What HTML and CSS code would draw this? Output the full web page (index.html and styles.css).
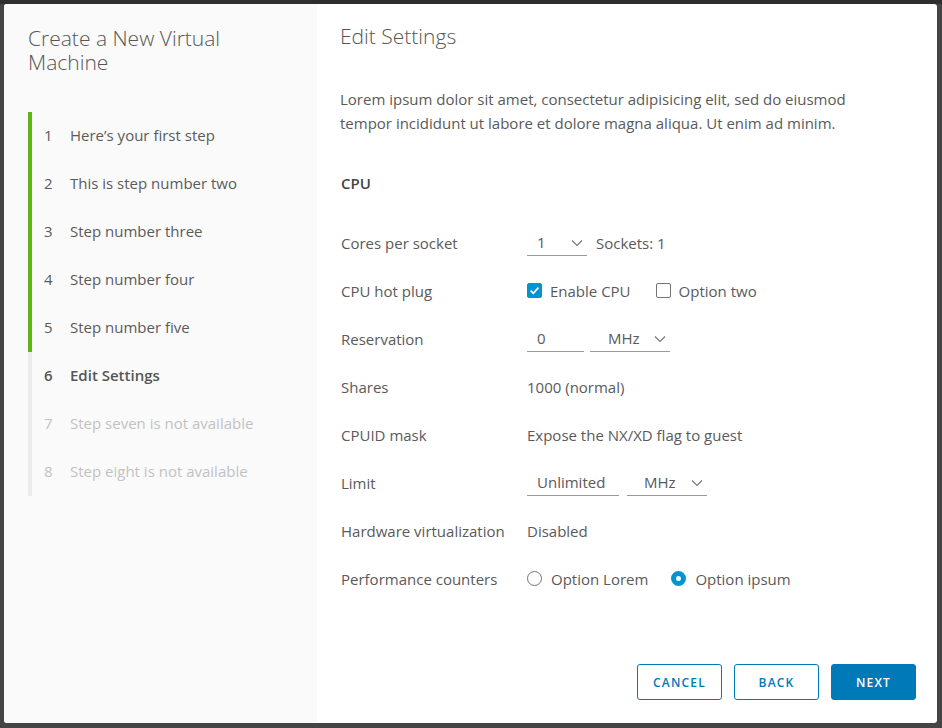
FILE: index.html
```html
<!DOCTYPE html>
<html lang="en">
<head>
<meta charset="utf-8">
<title>Create a New Virtual Machine</title>
<link rel="stylesheet" href="styles.css">
</head>
<body>
<div class="backdrop">
  <div class="modal">
    <aside class="nav">
      <h1 class="nav-title">Create a New Virtual Machine</h1>
      <ol class="steps">
        <li class="step done"><span class="num">1</span><span class="lbl">Here’s your first step</span></li>
        <li class="step done"><span class="num">2</span><span class="lbl">This is step number two</span></li>
        <li class="step done"><span class="num">3</span><span class="lbl">Step number three</span></li>
        <li class="step done"><span class="num">4</span><span class="lbl">Step number four</span></li>
        <li class="step done"><span class="num">5</span><span class="lbl">Step number five</span></li>
        <li class="step current"><span class="num">6</span><span class="lbl">Edit Settings</span></li>
        <li class="step disabled"><span class="num">7</span><span class="lbl">Step seven is not available</span></li>
        <li class="step disabled"><span class="num">8</span><span class="lbl">Step eight is not available</span></li>
      </ol>
    </aside>
    <main class="content">
      <h2 class="page-title">Edit Settings</h2>
      <p class="intro">Lorem ipsum dolor sit amet, consectetur adipisicing elit, sed do eiusmod tempor incididunt ut labore et dolore magna aliqua. Ut enim ad minim.</p>
      <h3 class="section">CPU</h3>
      <div class="form">
        <div class="row">
          <span class="label">Cores per socket</span>
          <div class="ctrl">
            <span class="select sel-cores"><span>1</span><svg class="chev" width="12" height="8" viewBox="0 0 12 8"><polyline points="1,1.5 6,6.5 11,1.5" fill="none" stroke="#747474" stroke-width="1.1"/></svg></span>
            <span class="text">Sockets: 1</span>
          </div>
        </div>
        <div class="row">
          <span class="label">CPU hot plug</span>
          <div class="ctrl gap-lg">
            <label class="check"><span class="box checked"><svg width="15" height="15" viewBox="0 0 15 15"><polyline points="3.6,7.6 6.3,10.2 11.4,4.6" fill="none" stroke="#fff" stroke-width="1.7"/></svg></span>Enable CPU</label>
            <label class="check"><span class="box"></span>Option two</label>
          </div>
        </div>
        <div class="row">
          <span class="label">Reservation</span>
          <div class="ctrl">
            <span class="input in-res">0</span>
            <span class="select sel-mhz"><span>MHz</span><svg class="chev" width="12" height="8" viewBox="0 0 12 8"><polyline points="1,1.5 6,6.5 11,1.5" fill="none" stroke="#747474" stroke-width="1.1"/></svg></span>
          </div>
        </div>
        <div class="row">
          <span class="label">Shares</span>
          <div class="ctrl"><span class="text">1000 (normal)</span></div>
        </div>
        <div class="row">
          <span class="label">CPUID mask</span>
          <div class="ctrl"><span class="text">Expose the NX/XD flag to guest</span></div>
        </div>
        <div class="row">
          <span class="label">Limit</span>
          <div class="ctrl">
            <span class="input in-limit">Unlimited</span>
            <span class="select sel-mhz2"><span>MHz</span><svg class="chev" width="12" height="8" viewBox="0 0 12 8"><polyline points="1,1.5 6,6.5 11,1.5" fill="none" stroke="#747474" stroke-width="1.1"/></svg></span>
          </div>
        </div>
        <div class="row">
          <span class="label">Hardware virtualization</span>
          <div class="ctrl"><span class="text">Disabled</span></div>
        </div>
        <div class="row">
          <span class="label">Performance counters</span>
          <div class="ctrl gap-xl">
            <label class="radio"><span class="dot"></span>Option Lorem</label>
            <label class="radio"><span class="dot on"></span>Option ipsum</label>
          </div>
        </div>
      </div>
      <div class="footer">
        <button class="btn btn-outline">CANCEL</button>
        <button class="btn btn-outline">BACK</button>
        <button class="btn btn-primary">NEXT</button>
      </div>
    </main>
  </div>
</div>
</body>
</html>
```

FILE: styles.css
```css
* { box-sizing: border-box; }
html, body { margin: 0; padding: 0; }
body {
  width: 942px;
  height: 728px;
  background: linear-gradient(#2e2e2e 0, #2e2e2e 4px, #444 4px, #444 100%);
  font-family: "Open Sans", "Lato", sans-serif;
  color: #5a5a5a;
  overflow: hidden;
}
.backdrop {
  padding: 4px 5px 5px 4px;
}
.modal {
  width: 933px;
  height: 719px;
  display: flex;
  background: #fff;
  border-radius: 3px;
  overflow: hidden;
}
.nav {
  width: 313px;
  flex: none;
  background: #fafafa;
  padding: 22px 0 0 24px;
}
.nav-title {
  margin: 0;
  font-size: 21px;
  line-height: 24px;
  font-weight: 300;
  color: #565656;
  width: 250px;
}
.steps {
  list-style: none;
  margin: 38px 0 0 0;
  padding: 0;
}
.step {
  height: 48px;
  display: flex;
  align-items: center;
  border-left: 4px solid #ebebeb;
  font-size: 15px;
  color: #5a5a5a;
  padding-bottom: 2px;
}
.step.done { border-left-color: #60b515; }
.step .num { width: 26px; padding-left: 12px; box-sizing: content-box; font-size: 15px; }
.step.current { font-weight: 600; color: #565656; }
.step.disabled { color: #c2c2c2; }
.content {
  flex: 1;
  display: flex;
  flex-direction: column;
  padding: 20px 21px 23px 23px;
}
.page-title {
  margin: 0;
  font-size: 21px;
  line-height: 24px;
  font-weight: 300;
  color: #565656;
}
.intro {
  margin: 39px 0 0 0;
  font-size: 15px;
  line-height: 24px;
  width: 540px;
}
.section {
  margin: 36px 0 0 1px;
  font-size: 15px;
  line-height: 24px;
  font-weight: 600;
  color: #444;
}
.form { margin: 24px 0 0 1px; }
.row {
  height: 48px;
  display: flex;
  align-items: center;
  font-size: 15px;
  padding-bottom: 1px;
}
.label { width: 186px; flex: none; }
.ctrl { display: flex; align-items: center; gap: 9px; }
.ctrl.gap-lg { gap: 25px; }
.ctrl.gap-xl { gap: 23px; }
.select, .input {
  display: flex;
  align-items: center;
  justify-content: space-between;
  height: 26px;
  border-bottom: 1px solid #9a9a9a;
  padding: 0 4px 0 10px;
}
.sel-cores { width: 60px; }
.in-res { width: 57px; margin-right: -3px; }
.sel-mhz { width: 80px; padding-left: 18px; }
.in-limit { width: 92px; }
.sel-mhz2 { width: 80px; padding-left: 17px; margin-left: -1px; }
.chev { margin-top: 1px; }
.check, .radio { display: flex; align-items: center; gap: 8px; }
.radio { gap: 9px; }
.box {
  width: 15px; height: 15px;
  border: 1px solid #747474;
  border-radius: 2px;
  background: #fff;
  display: block;
}
.box.checked { background: #0094d2; border-color: #0094d2; border-radius: 2px; }
.box svg { display: block; margin: -1px; }
.dot {
  width: 15px; height: 15px;
  border: 1px solid #747474;
  border-radius: 50%;
  background: #fff;
  display: block;
}
.dot.on { border: 5px solid #0094d2; }
.footer {
  margin-top: auto;
  display: flex;
  justify-content: flex-end;
  gap: 12px;
}
.btn {
  width: 85px;
  height: 36px;
  border-radius: 3px;
  font-family: "Open Sans", sans-serif;
  font-size: 12px;
  font-weight: 600;
  letter-spacing: 1.2px;
  cursor: pointer;
}
.btn-outline { background: #fff; border: 1px solid #0079b8; color: #0079b8; }
.btn-primary { background: #0079b8; border: 1px solid #0079b8; color: #fff; }
```
